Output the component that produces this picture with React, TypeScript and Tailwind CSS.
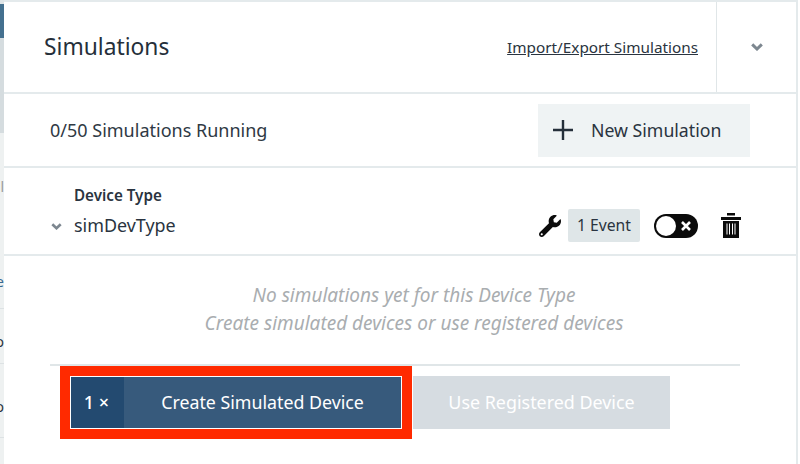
import { FaWrench } from 'react-icons/fa';

const Chevron = ({ className }: { className: string }) => (
  <svg viewBox="0 0 12 8" className={className} fill="none" stroke="currentColor" strokeWidth="3">
    <path d="M1.2 1.4 6 6 10.8 1.4" />
  </svg>
);

const Trash = () => (
  <svg viewBox="0 0 20 25" className="w-[20px] h-[25px]" fill="#0b0b0b">
    <rect x="6" y="0" width="8" height="2.5" />
    <rect x="0" y="4" width="20" height="3" />
    <path d="M2 8h16v17H2z" />
    <path d="M5.5 10.5h1v11h-1zM8 10.5h1v11H8zM11 10.5h1v11h-1zM13.5 10.5h1v11h-1z" fill="#fff" />
  </svg>
);

const Toggle = () => (
  <div className="w-[44px] h-[24px] rounded-full bg-[#0b0b0b] flex items-center justify-between pl-[2px] pr-[7px]">
    <div className="w-[20px] h-[20px] rounded-full bg-white" />
    <svg viewBox="0 0 10 10" className="w-[10px] h-[10px]" stroke="#fff" strokeWidth="2.6">
      <path d="M1 1l8 8M9 1l-8 8" />
    </svg>
  </div>
);

const App = () => {
  return (
    <div className="w-[800px] h-[464px] overflow-hidden flex bg-white text-[#2a3440] font-['Noto_Sans',sans-serif]">
      {/* кусочек страницы за панелью */}
      <div className="w-[4px] shrink-0 bg-[#eef1f1] flex flex-col overflow-hidden text-[14px] leading-[16px]">
        <div className="h-[4px] shrink-0 bg-[#dfe5e7]" />
        <div className="h-[34px] shrink-0 bg-[#44708f]" />
        <div className="h-[95px] shrink-0 bg-[#d5dcdf]" />
        <div className="mt-[46px] h-[16px] shrink-0 flex justify-end text-[#9a9a9a]">l</div>
        <div className="mt-[79px] h-[16px] shrink-0 flex justify-end text-[#3a6a90]">e</div>
        <div className="mt-[18px] h-px shrink-0 bg-[#dde2e4]" />
        <div className="mt-[25px] h-[16px] shrink-0 flex justify-end">o</div>
        <div className="mt-[13px] h-px shrink-0 bg-[#dde2e4]" />
        <div className="mt-[35px] h-[16px] shrink-0 flex justify-end">o</div>
        <div className="mt-[22px] h-px shrink-0 bg-[#dde2e4]" />
      </div>

      <div className="w-[792px] shrink-0 flex flex-col border-t-2 border-[#e4eaec]">
        <div className="h-[92px] flex items-center border-b-2 border-[#e4eaec]">
          <h2 className="pl-[40px] text-[22.8px] text-[#252f3a]">Simulations</h2>
          <a className="ml-auto text-[15.3px] underline text-[#2a3440]">Import/Export Simulations</a>
          <div className="w-[80px] h-full ml-[18px] border-l border-[#e0e6e8] flex items-center justify-center">
            <Chevron className="w-[12px] h-[8px] text-[#7d8790]" />
          </div>
        </div>

        <div className="h-[74px] flex items-center border-b-2 border-[#e4eaec]">
          <span className="pl-[46px] text-[18px] text-[#2f3944]">0/50 Simulations Running</span>
          <button className="ml-auto mr-[46px] w-[212px] h-[53px] bg-[#eff3f4] flex items-center pl-[15px] text-[17.7px]">
            <svg viewBox="0 0 20 20" className="w-[20px] h-[20px]" stroke="#252f3a" strokeWidth="2.4">
              <path d="M10 0v20M0 10h20" />
            </svg>
            <span className="ml-[18px]">New Simulation</span>
          </button>
        </div>

        <div className="h-[88px] flex items-end pb-[12px] border-b-2 border-[#e4eaec]">
          <Chevron className="ml-[47px] mb-[12px] w-[11px] h-[7px] text-[#7d8790]" />
          <div className="ml-[12px] flex flex-col mb-[5px]">
            <span className="text-[15.2px] leading-[20px] font-semibold">Device Type</span>
            <span className="mt-[8px] text-[17.9px] leading-[24px]">simDevType</span>
          </div>
          <div className="ml-auto mr-[55px] flex items-center">
            <FaWrench className="w-[22px] h-[22px] text-[#0b0b0b]" />
            <span className="ml-[7px] w-[72px] h-[33px] rounded-[2px] bg-[#dfe6e8] flex items-center justify-center text-[15.7px]">1 Event</span>
            <div className="ml-[14px]"><Toggle /></div>
            <div className="ml-[23px]"><Trash /></div>
          </div>
        </div>

        <div className="flex flex-col items-center pt-[25px] italic text-[19px] leading-[28px] text-[#a9adb0] pl-[28px] pr-0">
          <p className="w-full text-center">No simulations yet for this Device Type</p>
          <p className="w-full text-center">Create simulated devices or use registered devices</p>
        </div>

        <div className="mt-[27px] ml-[46px] w-[690px] h-[2px] bg-[#e0e6e8]" />

        <div className="flex items-center ml-[56px]">
          <div className="border-[10px] border-[#ff2a00] outline outline-1 -outline-offset-11 outline-white">
            <button className="w-[332px] h-[53px] flex bg-[#375a7c] text-white border border-[#c9d3dc]">
              <span className="w-[53px] h-full bg-[#234a70] flex items-center justify-center text-[18px] font-medium pr-[2px]">1 ×</span>
              <span className="flex-1 h-full flex items-center justify-center text-[17.8px]">Create Simulated Device</span>
            </button>
          </div>
          <button className="ml-px w-[257px] h-[53px] bg-[#d6dce1] text-white text-[17.9px]">Use Registered Device</button>
        </div>
      </div>

      <div className="w-[4px] shrink-0 border-l-2 border-[#e4eaec]" />
    </div>
  );
};

export default App;
